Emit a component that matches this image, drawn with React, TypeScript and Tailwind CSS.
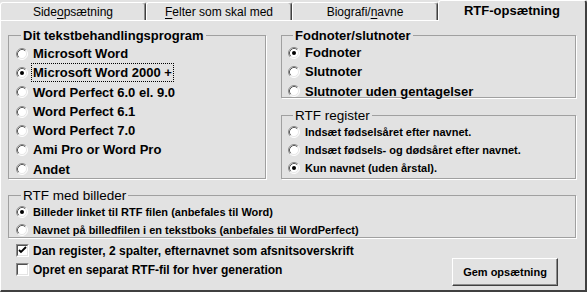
import React from 'react';

const Radio = ({ checked = false }: { checked?: boolean }) => (
  <svg width="12" height="12" viewBox="0 0 12 12" className="shrink-0">
    <circle cx="6" cy="6" r="5" fill="#fff" />
    <path d="M2.11 9.89 A5.5 5.5 0 0 1 9.89 2.11" stroke="#8c8c8c" fill="none" />
    <path d="M2.82 9.18 A4.5 4.5 0 0 1 9.18 2.82" stroke="#5a5a5a" fill="none" />
    <path d="M9.89 2.11 A5.5 5.5 0 0 1 2.11 9.89" stroke="#ffffff" fill="none" />
    <path d="M9.18 2.82 A4.5 4.5 0 0 1 2.82 9.18" stroke="#e8e8e8" fill="none" />
    {checked && <circle cx="6" cy="6" r="2" fill="#000" />}
  </svg>
);

const Checkbox = ({ checked = false }: { checked?: boolean }) => (
  <span className="w-[13px] h-[13px] shrink-0 bg-white border border-t-[#8c8c8c] border-l-[#8c8c8c] border-r-white border-b-white">
    <span className="flex w-full h-full border border-t-[#505050] border-l-[#505050] border-r-[#e4e4e4] border-b-[#e4e4e4]">
      {checked && (
        <svg width="9" height="9" viewBox="0 0 9 9">
          <path d="M1 4 L3 6 L8 1" stroke="#000" strokeWidth="1.8" fill="none" />
        </svg>
      )}
    </span>
  </span>
);

const Group = ({
  title,
  bold,
  className,
  children,
}: {
  title: string;
  bold?: boolean;
  className: string;
  children: React.ReactNode;
}) => (
  <fieldset className={`border border-[#a0a0a0] shadow-[1px_1px_0_#fff] ${className}`}>
    <legend
      className={`ml-[5px] px-[2px] leading-[15px] ${bold ? 'font-bold text-[13px]' : 'text-[13.5px]'}`}
    >
      {title}
    </legend>
    {children}
  </fieldset>
);

const Option = ({
  label,
  checked,
  big,
  focus,
}: {
  label: string;
  checked?: boolean;
  big?: boolean;
  focus?: boolean;
}) => (
  <div className={`flex items-center gap-[5px] ${big ? 'h-[19.3px]' : 'h-[18px]'}`}>
    <Radio checked={checked} />
    <span
      className={`font-bold whitespace-nowrap ${big ? 'text-[13px]' : 'text-[11px]'} ${
        focus ? 'outline-1 outline-dotted outline-black -ml-[1px] px-[1px] leading-[17px]' : ''
      }`}
    >
      {label}
    </span>
  </div>
);

const tabs = [
  { label: 'Side', u: 'o', rest: 'psætning' },
  { label: '', u: 'F', rest: 'elter som skal med' },
  { label: 'Biografi/', u: 'n', rest: 'avne' },
];

export default function App() {
  return (
    <div className="w-[587px] h-[292px] bg-[#e2e2e2] text-black font-['Liberation_Sans',Arial,sans-serif] flex flex-col select-none">
      {/* tab strip */}
      <div className="flex items-end h-[20px] shrink-0">
        {tabs.map((t, i) => (
          <div
            key={i}
            className="w-[146px] h-[18px] flex items-center justify-center text-[12px] border-t border-l border-white border-r border-r-[#404040] rounded-t-[3px] shadow-[inset_-1px_0_0_#8c8c8c]"
          >
            {t.label}
            <span className="underline underline-offset-2">{t.u}</span>
            {t.rest}
          </div>
        ))}
        <div className="relative z-10 -mb-px w-[149px] h-[21px] flex items-center justify-center pb-[1px] text-[13px] font-bold bg-[#e2e2e2] border-t border-l border-white border-r-2 border-r-[#404040] rounded-t-[3px]">
          RTF-opsætning
        </div>
      </div>

      {/* panel */}
      <div className="flex-1 flex flex-col border-t border-l border-white border-r-2 border-b-2 border-r-[#404040] border-b-[#404040] pl-[7px] pr-[9px] pt-[7px]">
        <div className="grid grid-cols-[258px_295px] gap-x-[15px]">
          <Group title="Dit tekstbehandlingsprogram" bold className="h-[151px] pl-[7px]">
            <div className="pt-[1px]">
              <Option big label="Microsoft Word" />
              <Option big checked focus label="Microsoft Word 2000 +" />
              <Option big label="Word Perfect 6.0 el. 9.0" />
              <Option big label="Word Perfect 6.1" />
              <Option big label="Word Perfect 7.0" />
              <Option big label="Ami Pro or Word Pro" />
              <Option big label="Andet" />
            </div>
          </Group>

          <div className="flex flex-col gap-[10px]">
            <Group title="Fodnoter/slutnoter" bold className="h-[70px] pl-[6px]">
              <Option big checked label="Fodnoter" />
              <Option big label="Slutnoter" />
              <Option big label="Slutnoter uden gentagelser" />
            </Group>
            <Group title="RTF register" className="h-[71px] pl-[6px]">
              <Option label="Indsæt fødselsåret efter navnet." />
              <Option label="Indsæt fødsels- og dødsåret efter navnet." />
              <Option checked label="Kun navnet (uden årstal)." />
            </Group>
          </div>
        </div>

        <Group title="RTF med billeder" className="mt-[9px] h-[50px] pl-[7px]">
          <Option checked label="Billeder linket til RTF filen (anbefales til Word)" />
          <Option label="Navnet på billedfilen i en tekstboks (anbefales til WordPerfect)" />
        </Group>

        <div className="flex">
          <div className="flex flex-col pt-[3px] pl-[8px]">
            <div className="flex items-center gap-[4px] h-[19px]">
              <Checkbox checked />
              <span className="text-[12px] font-bold whitespace-nowrap">
                Dan register, 2 spalter, efternavnet som afsnitsoverskrift
              </span>
            </div>
            <div className="flex items-center gap-[4px] h-[19px]">
              <Checkbox />
              <span className="text-[12px] font-bold whitespace-nowrap">
                Opret en separat RTF-fil for hver generation
              </span>
            </div>
          </div>
          <button className="ml-auto mr-[18px] mt-[20px] w-[106px] h-[28px] text-[11px] font-bold bg-[#e2e2e2] border border-t-white border-l-white border-r-[#404040] border-b-[#404040] shadow-[inset_-1px_-1px_0_#8c8c8c]">
            Gem opsætning
          </button>
        </div>
      </div>
    </div>
  );
}
